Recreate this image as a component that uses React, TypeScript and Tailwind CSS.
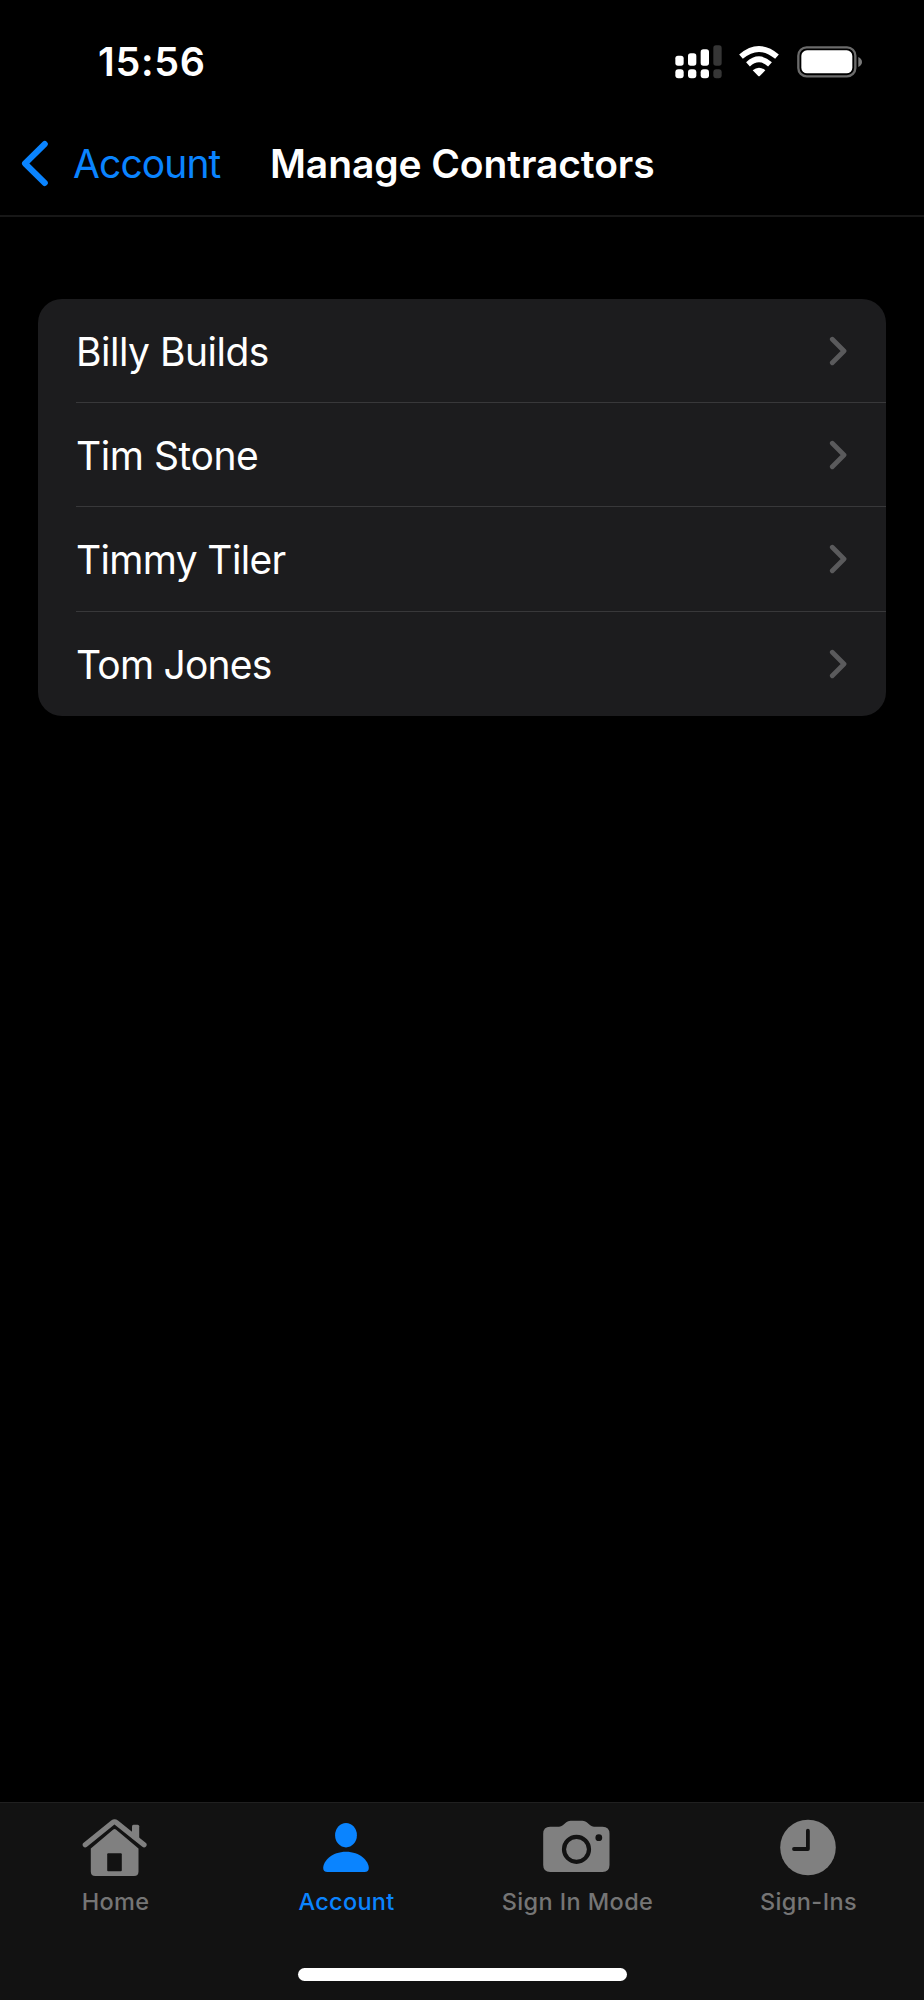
import type { ReactNode } from "react";

const contractors = [
  { name: "Billy Builds", tracking: "tracking-[-0.5px]" },
  { name: "Tim Stone", tracking: "tracking-[-0.45px]" },
  { name: "Timmy Tiler", tracking: "tracking-[-0.65px]" },
  { name: "Tom Jones", tracking: "tracking-[-0.8px]" },
];

function SignalIcon() {
  return (
    <svg width="47" height="36" viewBox="0 0 141 108" fill="white">
      <rect x="1" y="35" width="25" height="30" rx="8" />
      <rect x="39" y="28" width="25" height="37" rx="8" />
      <rect x="77" y="16" width="25" height="49" rx="8" />
      <rect x="115" y="4" width="25" height="61" rx="8" fill="#363636" />
      <rect x="1" y="76" width="25" height="27" rx="9" />
      <rect x="39" y="76" width="25" height="27" rx="9" />
      <rect x="77" y="76" width="25" height="27" rx="9" />
      <rect x="115" y="76" width="25" height="27" rx="9" fill="#363636" />
    </svg>
  );
}

function WifiIcon() {
  return (
    <svg width="42" height="36" viewBox="0 0 126 108" fill="none">
      <path d="M9 38 Q63 -8 117 38" stroke="white" strokeWidth="17" />
      <path d="M30 61 Q63 31 96 61" stroke="white" strokeWidth="17" />
      <path d="M44 79 Q63 63 82 79 L66 95 Q63 98 60 95 Z" fill="white" />
    </svg>
  );
}

function BatteryIcon() {
  return (
    <svg width="66" height="36" viewBox="0 0 198 108" fill="none">
      <rect x="4" y="10" width="171" height="87" rx="25" stroke="#6b6b6b" strokeWidth="7" />
      <rect x="13" y="19" width="153" height="69" rx="17" fill="white" />
      <path d="M184 39 Q195 45 195 54 Q195 63 184 69 Z" fill="#7a7a7a" />
    </svg>
  );
}

function HomeIcon() {
  return (
    <svg width="80" height="64" viewBox="0 0 80 64" fill="none">
      <path d="M57 22V10.2Q57 8.7 58.5 8.7H62.7Q64.2 8.7 64.2 10.2V27Z" fill="#808080" />
      <path d="M10.3 28.8L37.8 6.6Q39.6 5.2 41.4 6.6L69 28.8" stroke="#808080" strokeWidth="5.2" strokeLinecap="round" />
      <path
        d="M15.8 32.6L38.3 13.6Q39.6 12.5 40.9 13.6L63.5 32.6V55.5Q63.5 60 59 60H20.3Q15.8 60 15.8 55.5Z"
        fill="#808080"
      />
      <rect x="32.2" y="37.3" width="14.6" height="18" rx="1" fill="#121212" />
    </svg>
  );
}

function PersonIcon() {
  return (
    <svg width="80" height="64" viewBox="0 0 80 64" fill="#0a84ff">
      <ellipse cx="40" cy="19.2" rx="10.9" ry="12.2" />
      <path d="M17.2 52C17.2 45 26 35.7 40 35.7S62.8 45 62.8 52Q62.8 56 58.5 56H21.5Q17.2 56 17.2 52Z" />
    </svg>
  );
}

function CameraIcon() {
  return (
    <svg width="80" height="64" viewBox="0 0 80 64">
      <path
        d="M13.2 10.7H22Q24.2 10.7 25.8 9.3L29.3 6.2Q31 4.7 33.5 4.7H45.5Q48 4.7 49.7 6.2L53.2 9.3Q54.8 10.7 57 10.7H65.5Q72.5 10.7 72.5 17.7V49Q72.5 56 65.5 56H13.2Q6.2 56 6.2 49V17.7Q6.2 10.7 13.2 10.7Z"
        fill="#808080"
      />
      <circle cx="39.5" cy="33.3" r="12.5" fill="none" stroke="#121212" strokeWidth="4.2" />
      <circle cx="61.8" cy="21.7" r="3.4" fill="#121212" />
    </svg>
  );
}

function ClockIcon() {
  return (
    <svg width="80" height="64" viewBox="0 0 80 64" fill="none">
      <circle cx="40" cy="31.5" r="27.8" fill="#808080" />
      <path d="M39.9 14.7V33H26" stroke="#121212" strokeWidth="3.8" strokeLinecap="round" strokeLinejoin="round" />
    </svg>
  );
}

function Tab({ icon, label, className }: { icon: ReactNode; label: string; className: string }) {
  return (
    <button className="flex flex-1 flex-col items-center pt-[13px]">
      <span className="pr-px">{icon}</span>
      <span className={`mt-1.5 text-[23.5px] leading-8 font-medium whitespace-nowrap ${className}`}>{label}</span>
    </button>
  );
}

export default function App() {
  return (
    <div className="flex h-[2000px] w-[924px] flex-col bg-black font-['Inter',sans-serif] text-white">
      {/* Status bar */}
      <div className="flex h-[124px] items-center justify-between pr-[61px] pl-[98px]">
        <span className="pt-0.5 text-[39.5px] leading-none font-semibold tracking-[0.7px]">15:56</span>
        <div className="flex items-center">
          <SignalIcon />
          <div className="ml-4">
            <WifiIcon />
          </div>
          <div className="ml-[17px]">
            <BatteryIcon />
          </div>
        </div>
      </div>

      {/* Navigation bar */}
      <header className="flex h-[93px] items-center border-b-2 border-[#171717] pb-3 pl-5">
        <svg width="30" height="48" viewBox="0 0 30 48" fill="none">
          <path d="M24.8 4L5 23.5L24.8 43" stroke="#0a84ff" strokeWidth="6" strokeLinecap="round" strokeLinejoin="round" />
        </svg>
        <span className="ml-[23px] w-[197px] text-[39px] leading-none tracking-[-0.9px] text-[#0a84ff]">Account</span>
        <h1 className="text-[39px] leading-none font-semibold tracking-[-0.1px] whitespace-nowrap">Manage Contractors</h1>
      </header>

      {/* Contractor list */}
      <main className="flex-1 px-[38px] pt-[82px]">
        <ul className="overflow-hidden rounded-[24px] bg-[#1c1c1e]">
          {contractors.map((c, i) => (
            <li key={c.name} className="flex h-[104.2px] pl-[38px]">
              <div
                className={`flex flex-1 items-center justify-between pr-[39px] ${
                  i < contractors.length - 1 ? "border-b border-[#38383a]" : ""
                }`}
              >
                <span className={`pt-0.5 text-[39px] leading-none ${c.tracking}`}>{c.name}</span>
                <svg width="20" height="32" viewBox="0 0 20 32" fill="none">
                  <path d="M5.3 4.3L17 16L5.3 27.7" stroke="#5a5a5c" strokeWidth="4.8" strokeLinecap="round" strokeLinejoin="round" />
                </svg>
              </div>
            </li>
          ))}
        </ul>
      </main>

      {/* Tab bar */}
      <nav className="flex h-[198px] flex-col border-t border-[#202020] bg-[#121212]">
        <div className="flex">
          <Tab icon={<HomeIcon />} label="Home" className="tracking-[0.3px] text-[#757575]" />
          <Tab icon={<PersonIcon />} label="Account" className="tracking-[0.3px] text-[#0a84ff]" />
          <Tab icon={<CameraIcon />} label="Sign In Mode" className="tracking-[0.4px] text-[#757575]" />
          <Tab icon={<ClockIcon />} label="Sign-Ins" className="tracking-[0.4px] text-[#757575]" />
        </div>
        <div className="mx-auto mt-auto mb-[19px] h-[13px] w-[329px] rounded-full bg-white" />
      </nav>
    </div>
  );
}
